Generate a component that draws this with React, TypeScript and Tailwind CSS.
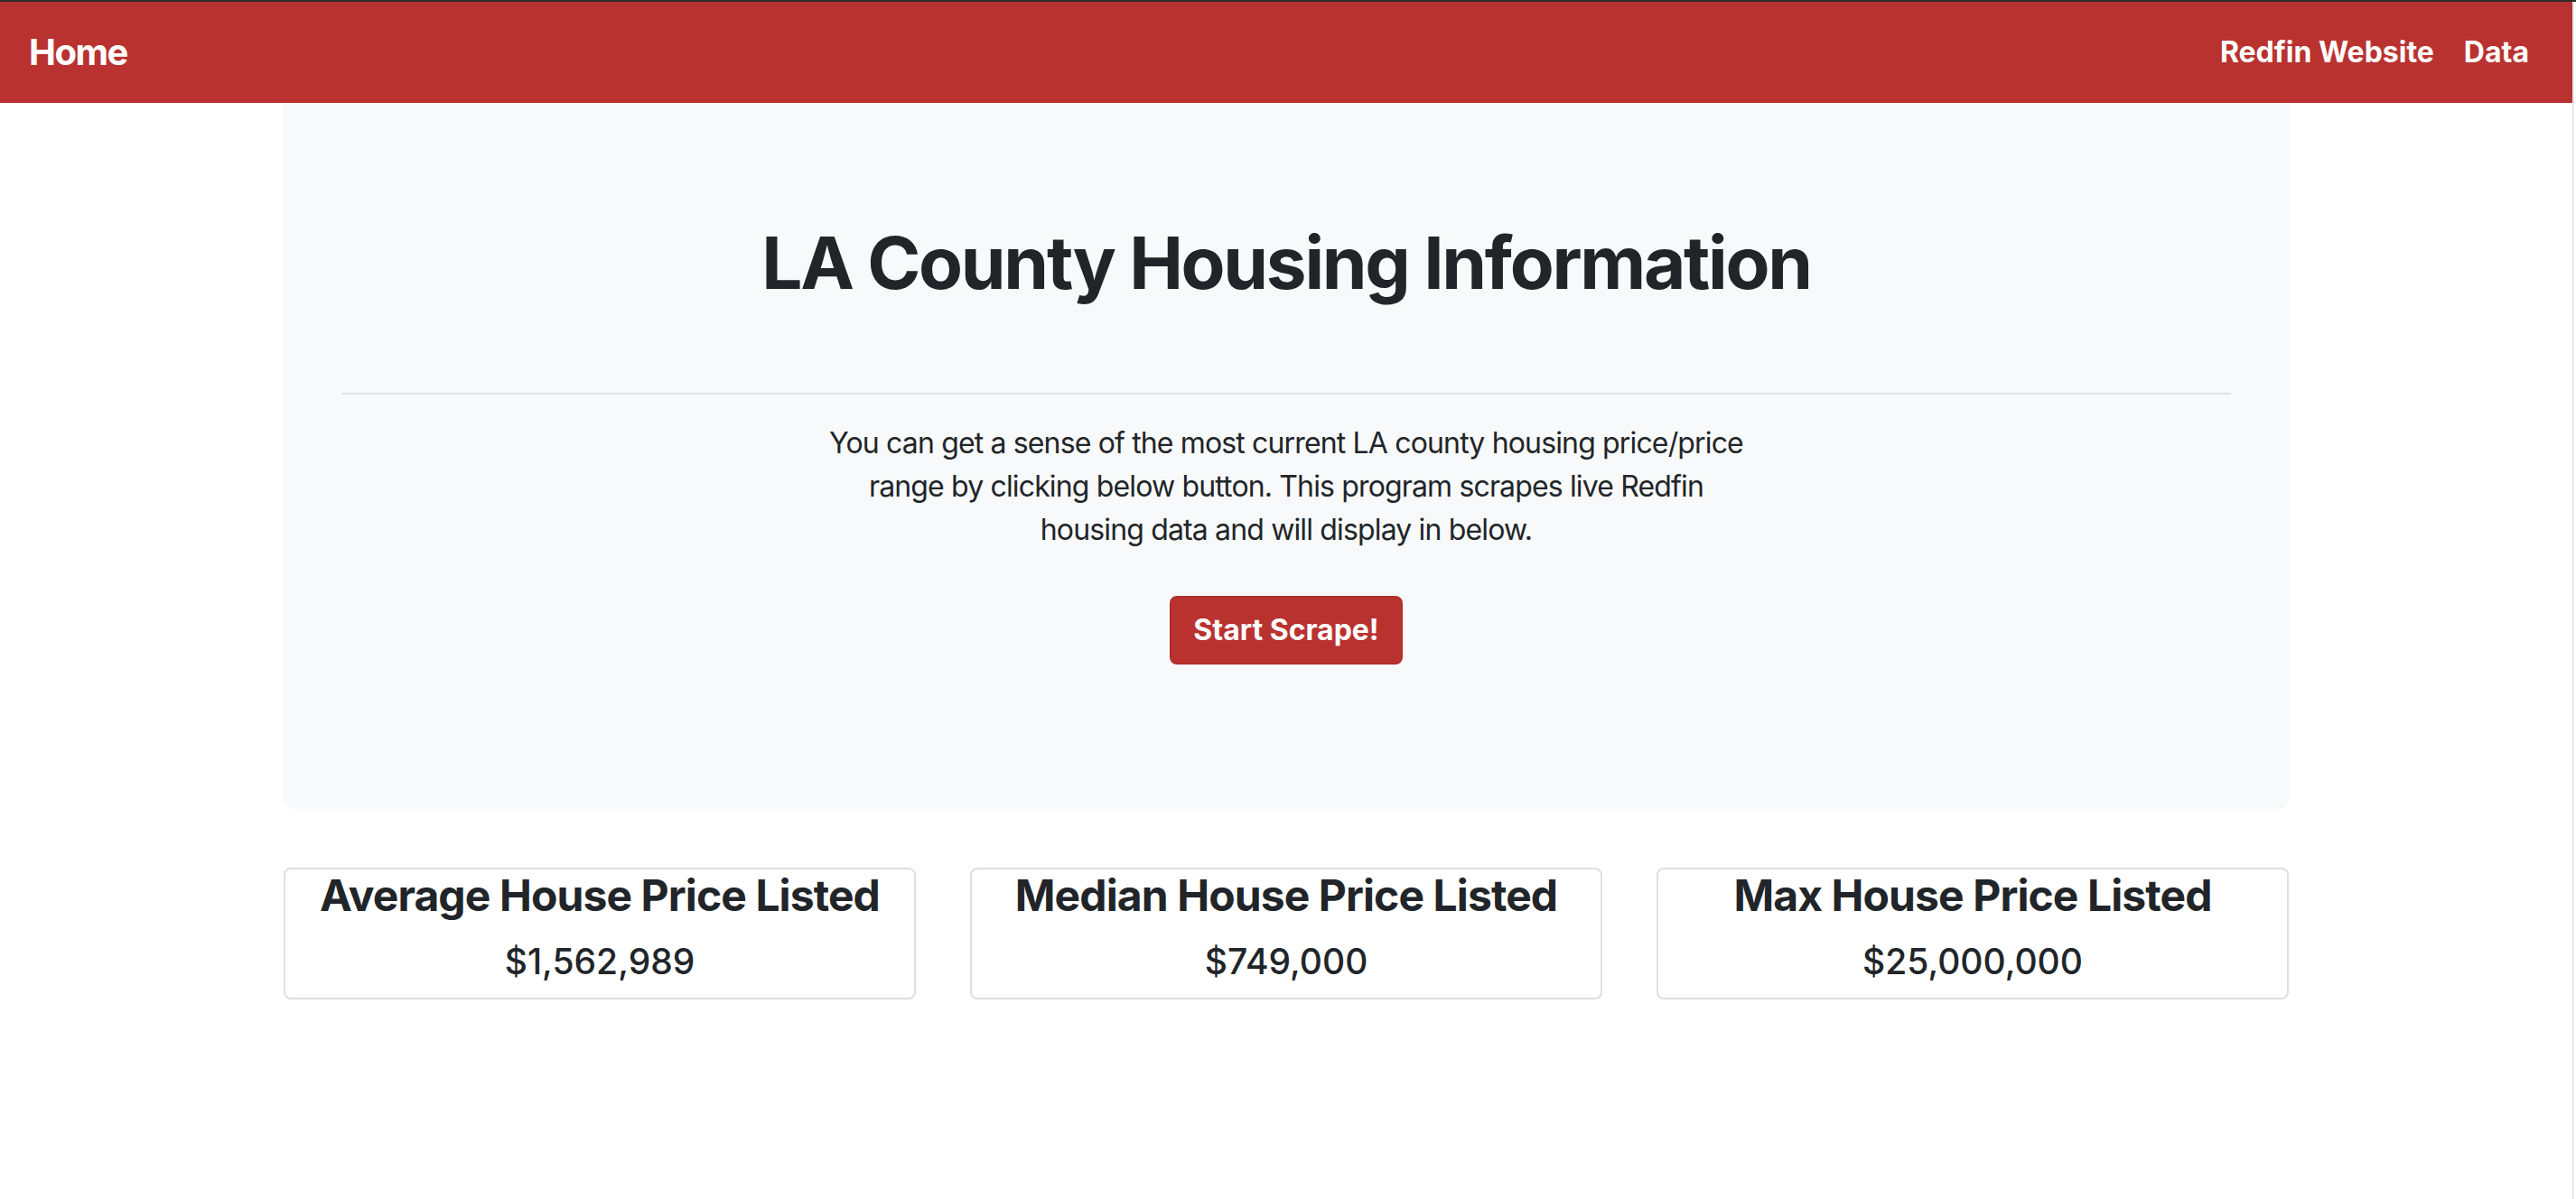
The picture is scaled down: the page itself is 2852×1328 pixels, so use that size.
import React from "react";

const STATS = [
  { label: "Average House Price Listed", value: "$1,562,989" },
  { label: "Median House Price Listed", value: "$749,000" },
  { label: "Max House Price Listed", value: "$25,000,000" },
];

const INTRO = [
  "You can get a sense of the most current LA county housing price/price",
  "range by clicking below button. This program scrapes live Redfin",
  "housing data and will display in below.",
];

export default function App() {
  return (
    <div className="min-h-screen w-full bg-white flex flex-col text-[#212529] font-['Inter','Noto_Sans',sans-serif]">
      {/* Window edge */}
      <div className="h-[2px] bg-[#2b2b2b] shrink-0" />

      <div className="flex flex-1">
        <div className="flex-1 min-w-0 flex flex-col">
          {/* Navbar */}
          <nav className="h-[112px] bg-[#b9322f] flex items-center justify-between pl-[32px] pr-[48px] shrink-0">
            <a className="text-[40px] leading-[60px] font-bold tracking-[-1.5px] text-white">Home</a>
            <div className="flex items-center gap-[33px]">
              <a className="text-[32px] leading-[48px] font-bold text-white">Redfin Website</a>
              <a className="text-[32px] leading-[48px] font-bold text-white">Data</a>
            </div>
          </nav>

          <main className="w-[2220px] mx-auto">
            {/* Jumbotron */}
            <section className="bg-[#f8f9fa] rounded-b-[10px] px-[64px] pt-[129px] pb-[160px] flex flex-col items-center">
              <h1 className="text-[80px] leading-[96px] font-bold tracking-[-2.3px] text-center">
                LA County Housing Information
              </h1>
              <hr className="w-full mt-[96px] border-0 border-t-2 border-[#dfe0e1]" />
              <p className="mt-[30px] text-[32px] leading-[48px] tracking-[-0.85px] text-center">
                {INTRO.map(line => (
                  <span key={line} className="block">{line}</span>
                ))}
              </p>
              <button className="mt-[49px] bg-[#b9322f] border-2 border-[#b02e2b] rounded-[8px] px-[24px] py-[12px] text-[32px] leading-[48px] font-bold text-white">
                Start Scrape!
              </button>
            </section>

            {/* Stats */}
            <div className="grid grid-cols-3 gap-[60px] mt-[65px]">
              {STATS.map(s => (
                <div key={s.label} className="border-2 border-[#dfdfdf] rounded-[8px] flex flex-col items-center pb-[16px]">
                  <h4 className="text-[48px] leading-[58px] font-bold tracking-[-0.9px]">{s.label}</h4>
                  <p className="mt-[20px] text-[39px] leading-[48px] font-medium">{s.value}</p>
                </div>
              ))}
            </div>
          </main>
        </div>

        {/* Scrollbar gutter */}
        <div className="w-[4px] shrink-0 border-l-2 border-[#e6e6e6] bg-white" />
      </div>
    </div>
  );
}
